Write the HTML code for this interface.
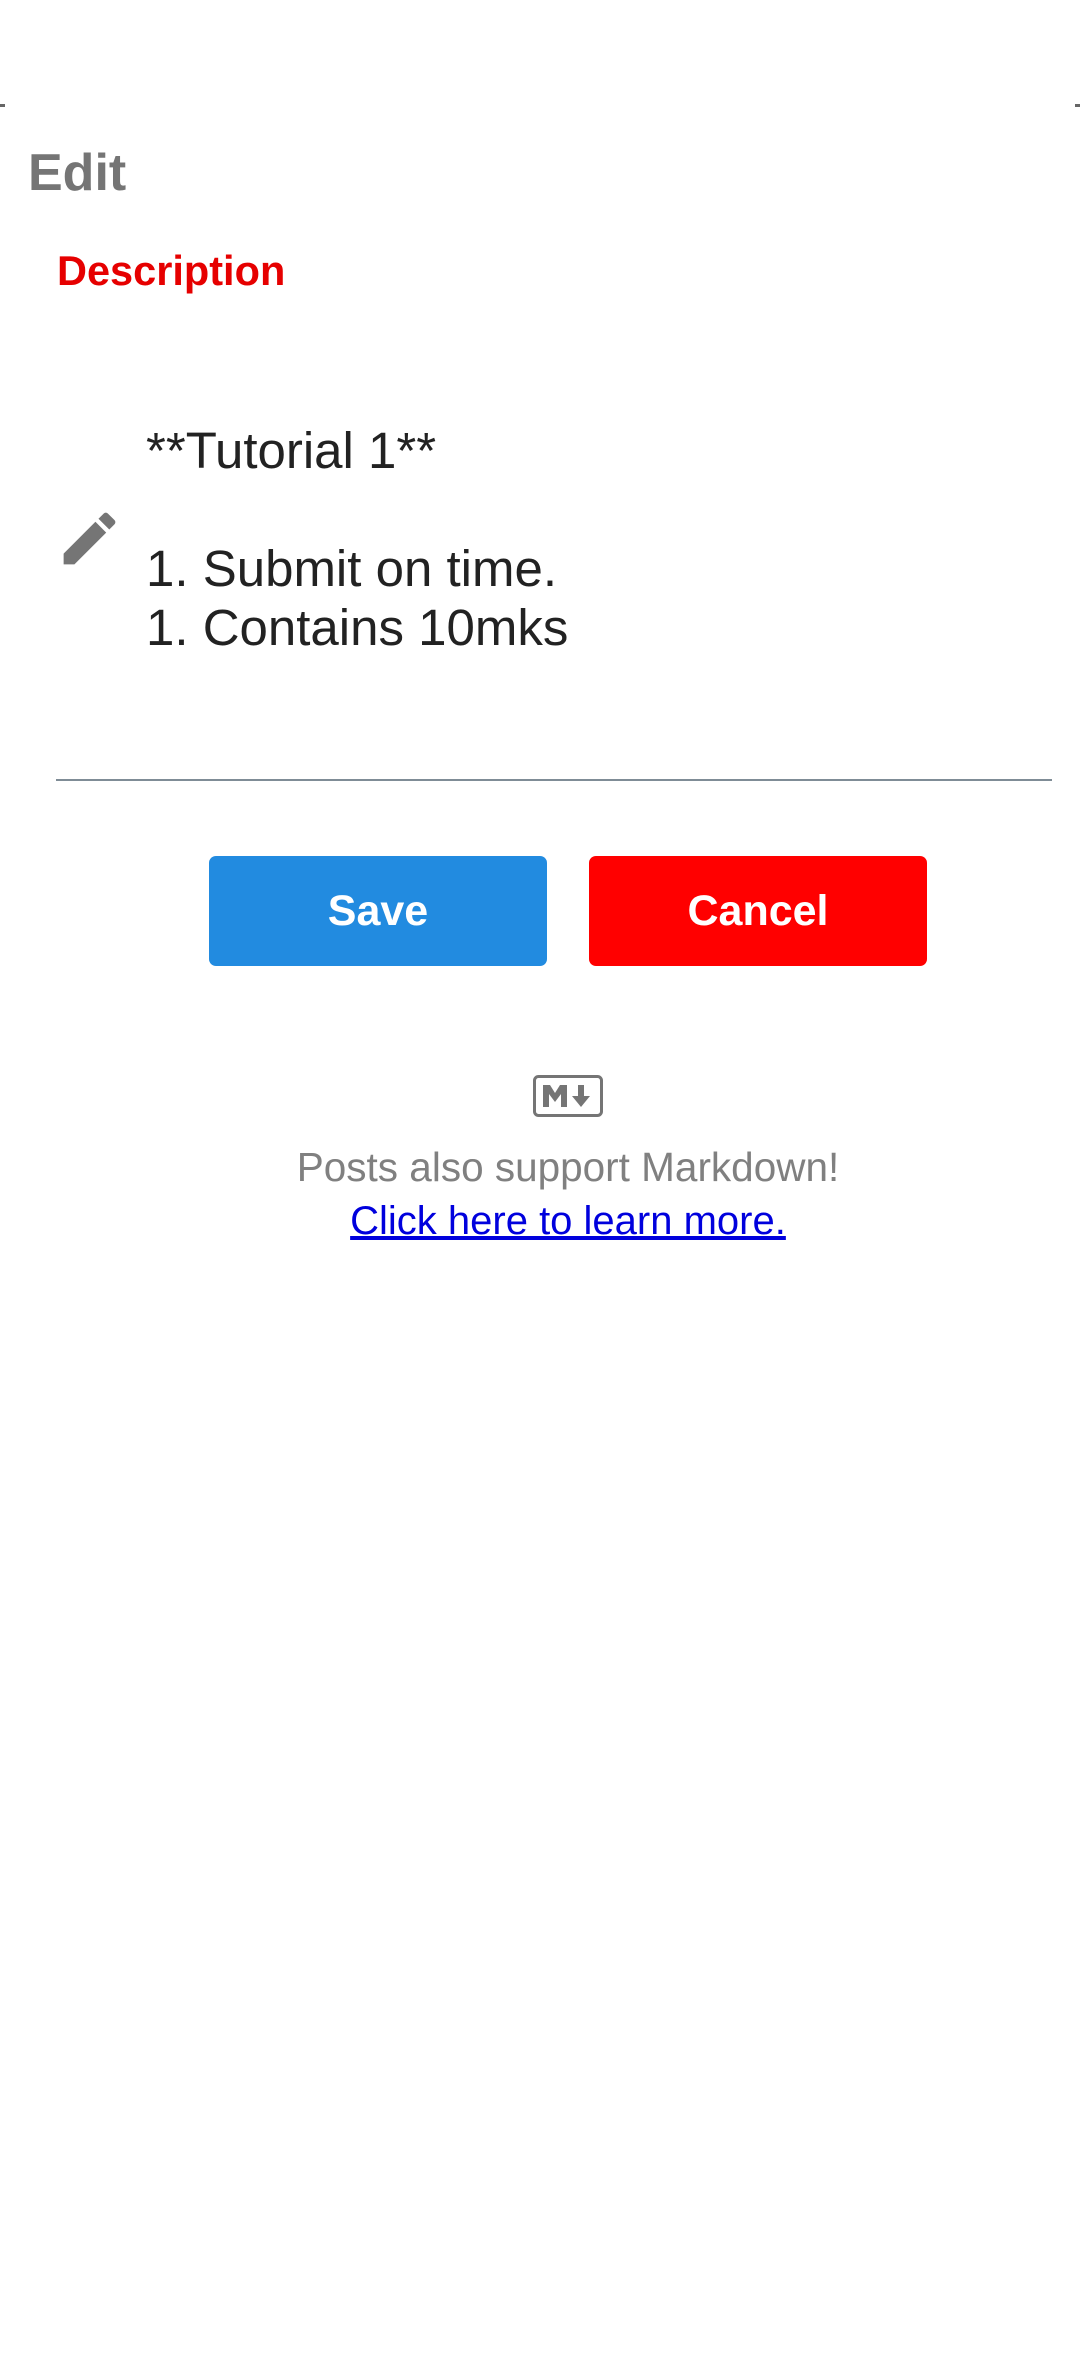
<!DOCTYPE html>
<html><head><meta charset="utf-8"><style>
html,body{margin:0;padding:0;background:#fff;}
body{width:1080px;height:2376px;position:relative;overflow:hidden;font-family:"Liberation Sans",Roboto,sans-serif;}
.abs{position:absolute;white-space:nowrap;}
.btn{position:absolute;top:856px;height:110px;width:338px;border-radius:7px;color:#fff;font-size:43px;font-weight:bold;display:flex;align-items:center;justify-content:center;}
</style></head><body>
<div class="abs" style="left:0;top:104px;width:5px;height:3px;background:#666;"></div>
<div class="abs" style="right:0;top:104px;width:5px;height:3px;background:#666;"></div>
<div class="abs" style="left:28px;top:142px;font-size:52px;font-weight:bold;color:#757575;line-height:62px;">Edit</div>
<div class="abs" style="left:57px;top:246px;font-size:41.5px;font-weight:bold;color:#e60000;line-height:50px;">Description</div>
<svg class="abs" style="left:55px;top:504px" width="69" height="69" viewBox="0 0 24 24"><path fill="#757575" d="M3 17.25V21h3.75L17.81 9.94l-3.75-3.75L3 17.25zM20.71 7.04c.39-.39.39-1.02 0-1.41l-2.34-2.34a.996.996 0 0 0-1.41 0l-1.83 1.83 3.75 3.75 1.83-1.83z"/></svg>
<div class="abs" style="left:146px;top:421px;font-size:51px;line-height:59px;color:#222;white-space:pre;">**Tutorial 1**

1. Submit on time.
1. Contains 10mks</div>
<div class="abs" style="left:56px;top:779px;width:996px;height:2px;background:#7f8c96;"></div>
<div class="btn" style="left:209px;background:#228be0;">Save</div>
<div class="btn" style="left:589px;background:#ff0000;">Cancel</div>
<svg class="abs" style="left:533px;top:1075px" width="70" height="42" viewBox="0 0 70 42"><rect x="1.5" y="1.5" width="67" height="39" rx="4" fill="none" stroke="#757575" stroke-width="3"/><path fill="#757575" d="M10 32V10h7l5 8 5-8h7v22h-6V19l-6 8-6-8v13z"/><path fill="#757575" d="M45 10h6v11h6l-9 11-9-11h6z"/></svg>
<div class="abs" style="left:0;width:1136px;text-align:center;top:1143px;font-size:40.5px;color:#808080;line-height:48px;">Posts also support Markdown!</div>
<div class="abs" style="left:0;width:1136px;text-align:center;top:1197px;font-size:40px;color:#0000dd;line-height:48px;"><span style="text-decoration:underline;">Click here to learn more.</span></div>
</body></html>
